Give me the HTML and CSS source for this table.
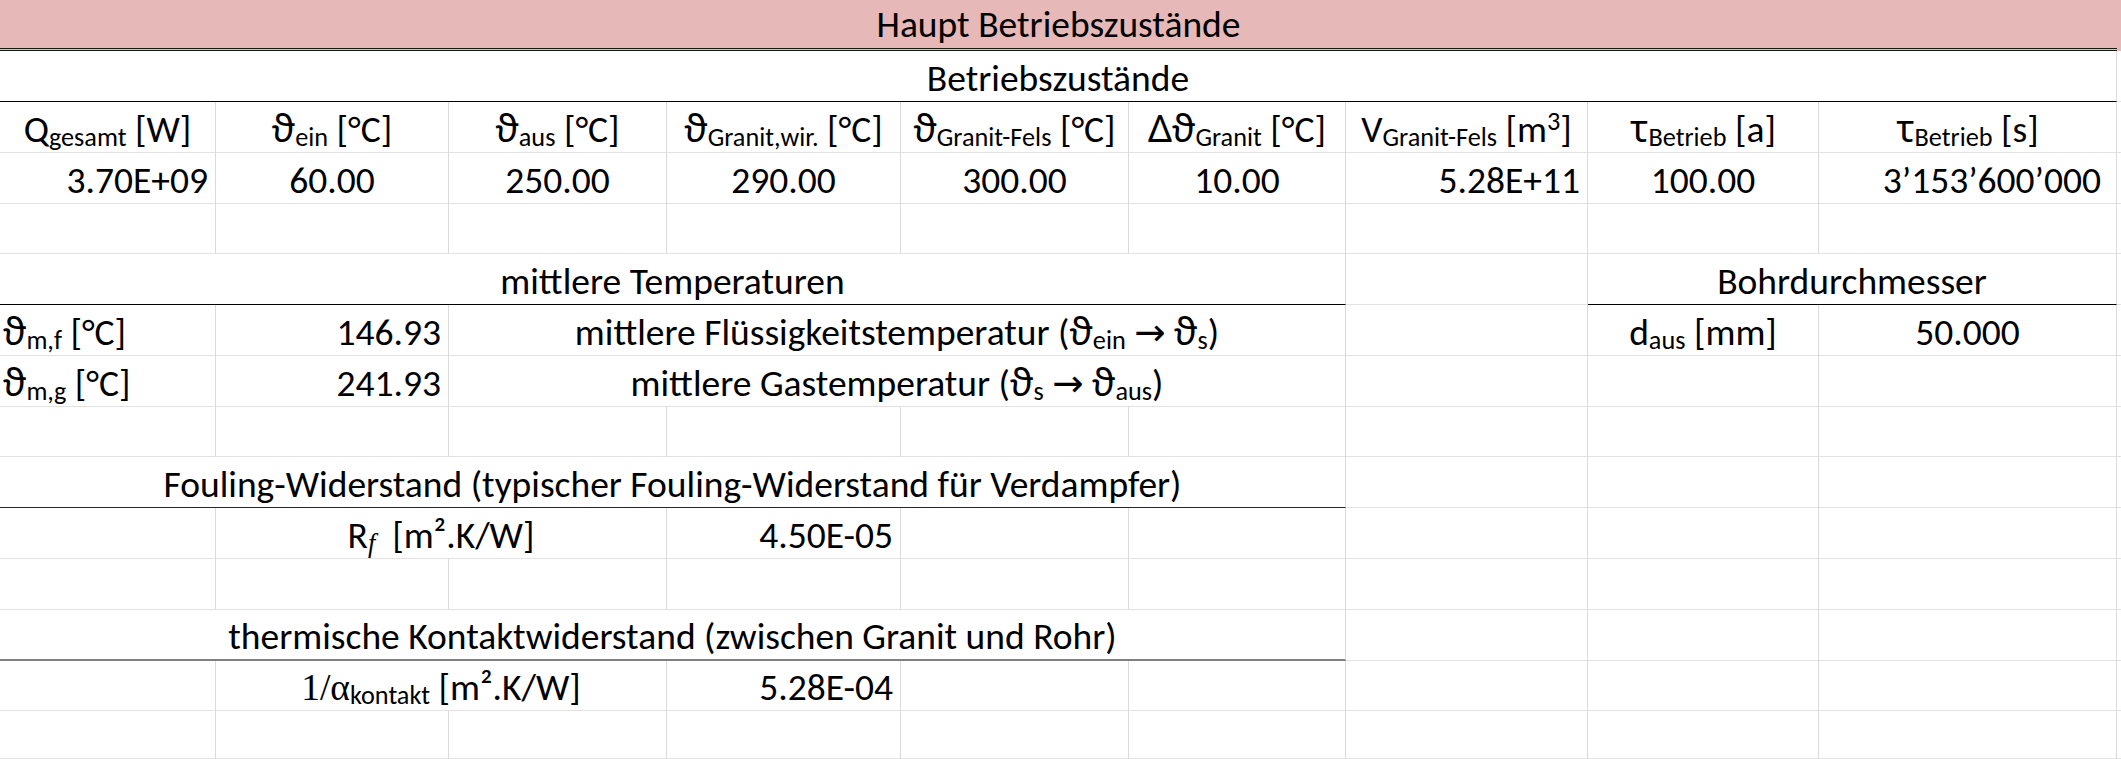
FILE: index.html
```html
<!DOCTYPE html>
<html lang="de">
<head>
<meta charset="utf-8">
<title>Haupt Betriebszustände</title>
<link rel="stylesheet" href="styles.css">
</head>
<body>
<div class="sheet">
  <!-- r0 -->
  <div class="c title s9 dbl"><span class="t">Haupt Betriebszustände</span></div>
  <div class="c title fill"></div>
  <!-- r1 -->
  <div class="c center s9 bk"><span class="t">Betriebszustände</span></div>
  <div class="c fill"></div>
  <!-- r2 -->
  <div class="c center"><span class="t">Q<span class="sub">gesamt</span> [W]</span></div>
  <div class="c center"><span class="t"><span class="g">ϑ</span><span class="sub">ein</span> [°C]</span></div>
  <div class="c center"><span class="t"><span class="g">ϑ</span><span class="sub">aus</span> [°C]</span></div>
  <div class="c center"><span class="t"><span class="g">ϑ</span><span class="sub">Granit,wir.</span> [°C]</span></div>
  <div class="c center"><span class="t"><span class="g">ϑ</span><span class="sub">Granit-Fels</span> [°C]</span></div>
  <div class="c center"><span class="t"><span class="g">Δϑ</span><span class="sub">Granit</span> [°C]</span></div>
  <div class="c center"><span class="t">V<span class="sub">Granit-Fels</span> [m<span class="sup">3</span>]</span></div>
  <div class="c center"><span class="t"><span class="g">τ</span><span class="sub">Betrieb</span> [a]</span></div>
  <div class="c center"><span class="t"><span class="g">τ</span><span class="sub">Betrieb</span> [s]</span></div>
  <div class="c fill"></div>
  <!-- r3 -->
  <div class="c right"><span class="t">3.70E+09</span></div>
  <div class="c center"><span class="t">60.00</span></div>
  <div class="c center"><span class="t">250.00</span></div>
  <div class="c center"><span class="t">290.00</span></div>
  <div class="c center"><span class="t">300.00</span></div>
  <div class="c center"><span class="t">10.00</span></div>
  <div class="c right"><span class="t">5.28E+11</span></div>
  <div class="c center"><span class="t">100.00</span></div>
  <div class="c right wide"><span class="t">3’153’600’000</span></div>
  <div class="c fill"></div>
  <!-- r4 -->
  <div class="c"></div><div class="c"></div><div class="c"></div><div class="c"></div><div class="c"></div><div class="c"></div><div class="c"></div><div class="c"></div><div class="c"></div>
  <div class="c fill"></div>
  <!-- r5 -->
  <div class="c center s6 bk"><span class="t">mittlere Temperaturen</span></div>
  <div class="c"></div>
  <div class="c center s2 bk"><span class="t">Bohrdurchmesser</span></div>
  <div class="c fill"></div>
  <!-- r6 -->
  <div class="c left"><span class="t"><span class="g">ϑ</span><span class="sub">m,f</span> [°C]</span></div>
  <div class="c right"><span class="t">146.93</span></div>
  <div class="c center s4"><span class="t">mittlere Flüssigkeitstemperatur (<span class="g">ϑ</span><span class="sub">ein</span> <span class="g">→</span> <span class="g">ϑ</span><span class="sub">s</span>)</span></div>
  <div class="c"></div>
  <div class="c center"><span class="t">d<span class="sub">aus</span> [mm]</span></div>
  <div class="c center"><span class="t">50.000</span></div>
  <div class="c fill"></div>
  <!-- r7 -->
  <div class="c left"><span class="t"><span class="g">ϑ</span><span class="sub">m,g</span> [°C]</span></div>
  <div class="c right"><span class="t">241.93</span></div>
  <div class="c center s4"><span class="t">mittlere Gastemperatur (<span class="g">ϑ</span><span class="sub">s</span> <span class="g">→</span> <span class="g">ϑ</span><span class="sub">aus</span>)</span></div>
  <div class="c"></div><div class="c"></div><div class="c"></div>
  <div class="c fill"></div>
  <!-- r8 -->
  <div class="c"></div><div class="c"></div><div class="c"></div><div class="c"></div><div class="c"></div><div class="c"></div><div class="c"></div><div class="c"></div><div class="c"></div>
  <div class="c fill"></div>
  <!-- r9 -->
  <div class="c center s6 bk2"><span class="t">Fouling-Widerstand (typischer Fouling-Widerstand für Verdampfer)</span></div>
  <div class="c"></div><div class="c"></div><div class="c"></div>
  <div class="c fill"></div>
  <!-- r10 -->
  <div class="c"></div>
  <div class="c center s2"><span class="t">R<span class="sub it">f</span>&nbsp; [m².K/W]</span></div>
  <div class="c right"><span class="t">4.50E-05</span></div>
  <div class="c"></div><div class="c"></div><div class="c"></div><div class="c"></div><div class="c"></div>
  <div class="c fill"></div>
  <!-- r11 -->
  <div class="c"></div><div class="c"></div><div class="c"></div><div class="c"></div><div class="c"></div><div class="c"></div><div class="c"></div><div class="c"></div><div class="c"></div>
  <div class="c fill"></div>
  <!-- r12 -->
  <div class="c center s6 gr"><span class="t">thermische Kontaktwiderstand (zwischen Granit und Rohr)</span></div>
  <div class="c"></div><div class="c"></div><div class="c"></div>
  <div class="c fill"></div>
  <!-- r13 -->
  <div class="c"></div>
  <div class="c center s2"><span class="t"><span class="m">1/α</span><span class="sub">kontakt</span> [m².K/W]</span></div>
  <div class="c right"><span class="t">5.28E-04</span></div>
  <div class="c"></div><div class="c"></div><div class="c"></div><div class="c"></div><div class="c"></div>
  <div class="c fill"></div>
  <!-- r14 -->
  <div class="c"></div><div class="c"></div><div class="c"></div><div class="c"></div><div class="c"></div><div class="c"></div><div class="c"></div><div class="c"></div><div class="c"></div>
  <div class="c fill"></div>
</div>
</body>
</html>
```

FILE: styles.css
```css
html, body {
  margin: 0;
  padding: 0;
  background: #ffffff;
}

body {
  font-family: Carlito, "Open Sans", "Noto Sans", "DejaVu Sans", sans-serif;
  font-size: 37.5px;
  color: #000000;
}

.sheet {
  display: grid;
  grid-template-columns: 216px 233px 218px 234px 228px 217px 242px 231px 298px 4px;
  grid-template-rows: 51px 51px 51px 51px 50px 51px 51px 51px 50px 51px 51px 51px 51px 50px 48px;
  width: 2121px;
  height: 759px;
  overflow: hidden;
}

.c {
  box-sizing: border-box;
  display: flex;
  align-items: flex-end;
  padding: 0 7px 0 7px;
  border-right: 1px solid #dadada;
  border-bottom: 1px solid #e2e2e2;
  white-space: nowrap;
  min-width: 0;
}

.t {
  display: block;
  line-height: 1.2;
  white-space: pre;
}

.center { justify-content: center; }
.left { justify-content: flex-start; padding-left: 3px; }
.right { justify-content: flex-end; }
.wide { padding-right: 15px; }

.s2 { grid-column: span 2; }
.s4 { grid-column: span 4; }
.s6 { grid-column: span 6; }
.s9 { grid-column: span 9; }

.fill {
  border-right: none;
  padding: 0;
}

.title {
  background: #e6b8b7;
  justify-content: center;
  border-right: none;
  border-bottom: none;
  padding-bottom: 1px;
}

.dbl {
  border-bottom: 3px double #1a1a1a;
}

.bk { border-bottom: 1px solid #000000; }
.bk2 { border-bottom: 1px solid #262626; }
.gr { border-bottom: 2px solid #808080; }

.sub {
  font-size: 0.7em;
  vertical-align: -4px;
  line-height: 1;
}

.sup {
  font-size: 0.7em;
  vertical-align: 12px;
  line-height: 1;
}

.g {
  font-family: "Noto Sans", "DejaVu Sans", sans-serif;
}

.m {
  font-family: "Liberation Serif", "DejaVu Serif", serif;
}

.it {
  font-family: "Liberation Serif", "DejaVu Serif", serif;
  font-style: italic;
}
```
